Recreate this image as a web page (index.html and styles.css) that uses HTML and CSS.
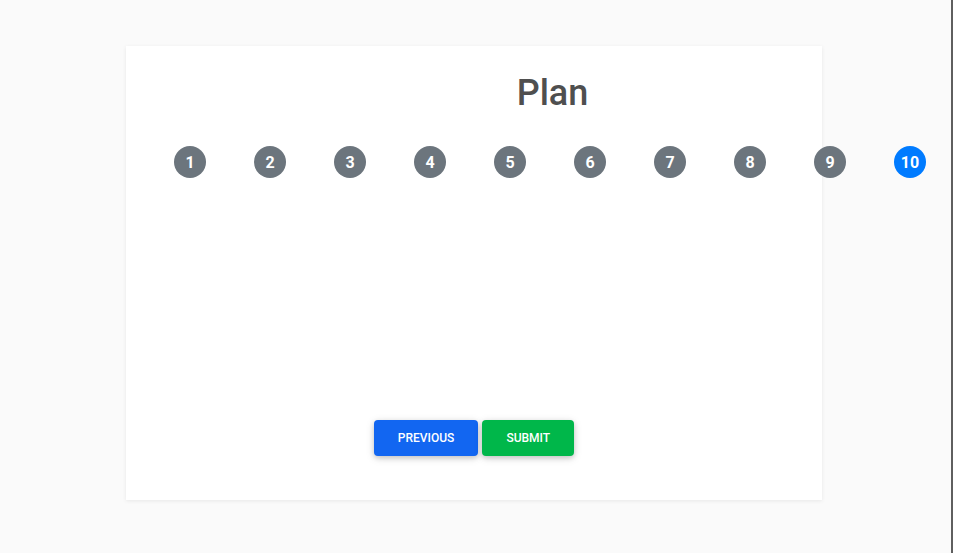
FILE: index.html
```html
<!DOCTYPE html>
<html lang="en">
<head>
<meta charset="utf-8">
<title>Plan</title>
<link rel="stylesheet" href="styles.css">
</head>
<body>
<div class="page">
  <div class="card">
    <div class="inner">
      <h1 class="title">Plan</h1>
      <ol class="steps">
        <li class="step"><span class="dot">1</span></li>
        <li class="step"><span class="dot">2</span></li>
        <li class="step"><span class="dot">3</span></li>
        <li class="step"><span class="dot">4</span></li>
        <li class="step"><span class="dot">5</span></li>
        <li class="step"><span class="dot">6</span></li>
        <li class="step"><span class="dot">7</span></li>
        <li class="step"><span class="dot">8</span></li>
        <li class="step"><span class="dot">9</span></li>
        <li class="step"><span class="dot active">10</span></li>
      </ol>
    </div>
    <div class="content"></div>
    <div class="actions">
      <button class="btn btn-primary">Previous</button>
      <button class="btn btn-success">Submit</button>
    </div>
  </div>
</div>
</body>
</html>
```

FILE: styles.css
```css
html, body {
  margin: 0;
  padding: 0;
  height: 100%;
  background: #fafafa;
  font-family: Roboto, "Liberation Sans", Arial, sans-serif;
}
body {
  overflow: hidden;
}
.page {
  height: 100%;
  box-sizing: border-box;
  padding: 46px 0 0 126px;
  border-right: 2px solid #5f5f5f;
}
.card {
  width: 696px;
  height: 454px;
  box-sizing: border-box;
  background: #fff;
  box-shadow: 0 1px 4px rgba(0, 0, 0, 0.08);
  padding: 26px 24px 44px;
  display: flex;
  flex-direction: column;
}
.inner {
  width: 800px;
}
.title {
  margin: 0;
  padding-left: 5px;
  text-align: center;
  font-size: 36px;
  font-weight: 500;
  line-height: 43px;
  color: #4f4f4f;
}
.steps {
  list-style: none;
  margin: 31px 0 0;
  padding: 0;
  display: flex;
}
.step {
  width: 80px;
  display: flex;
  justify-content: center;
}
.dot {
  width: 32px;
  height: 32px;
  border-radius: 50%;
  background: #6c757d;
  color: #fff;
  font-weight: 700;
  font-size: 16px;
  display: flex;
  align-items: center;
  justify-content: center;
}
.dot.active {
  background: #007bff;
}
.content {
  flex: 1;
}
.actions {
  display: flex;
  justify-content: center;
  gap: 4px;
}
.btn {
  height: 36px;
  border: 0;
  border-radius: 4px;
  color: #fff;
  font-family: Roboto, "Liberation Sans", Arial, sans-serif;
  font-size: 12px;
  font-weight: 500;
  text-transform: uppercase;
  padding: 0 24px;
  box-shadow: 0 2px 5px rgba(0, 0, 0, 0.16), 0 2px 10px rgba(0, 0, 0, 0.12);
}
.btn-primary {
  background: #1266f1;
}
.btn-success {
  background: #00b74a;
}
```
